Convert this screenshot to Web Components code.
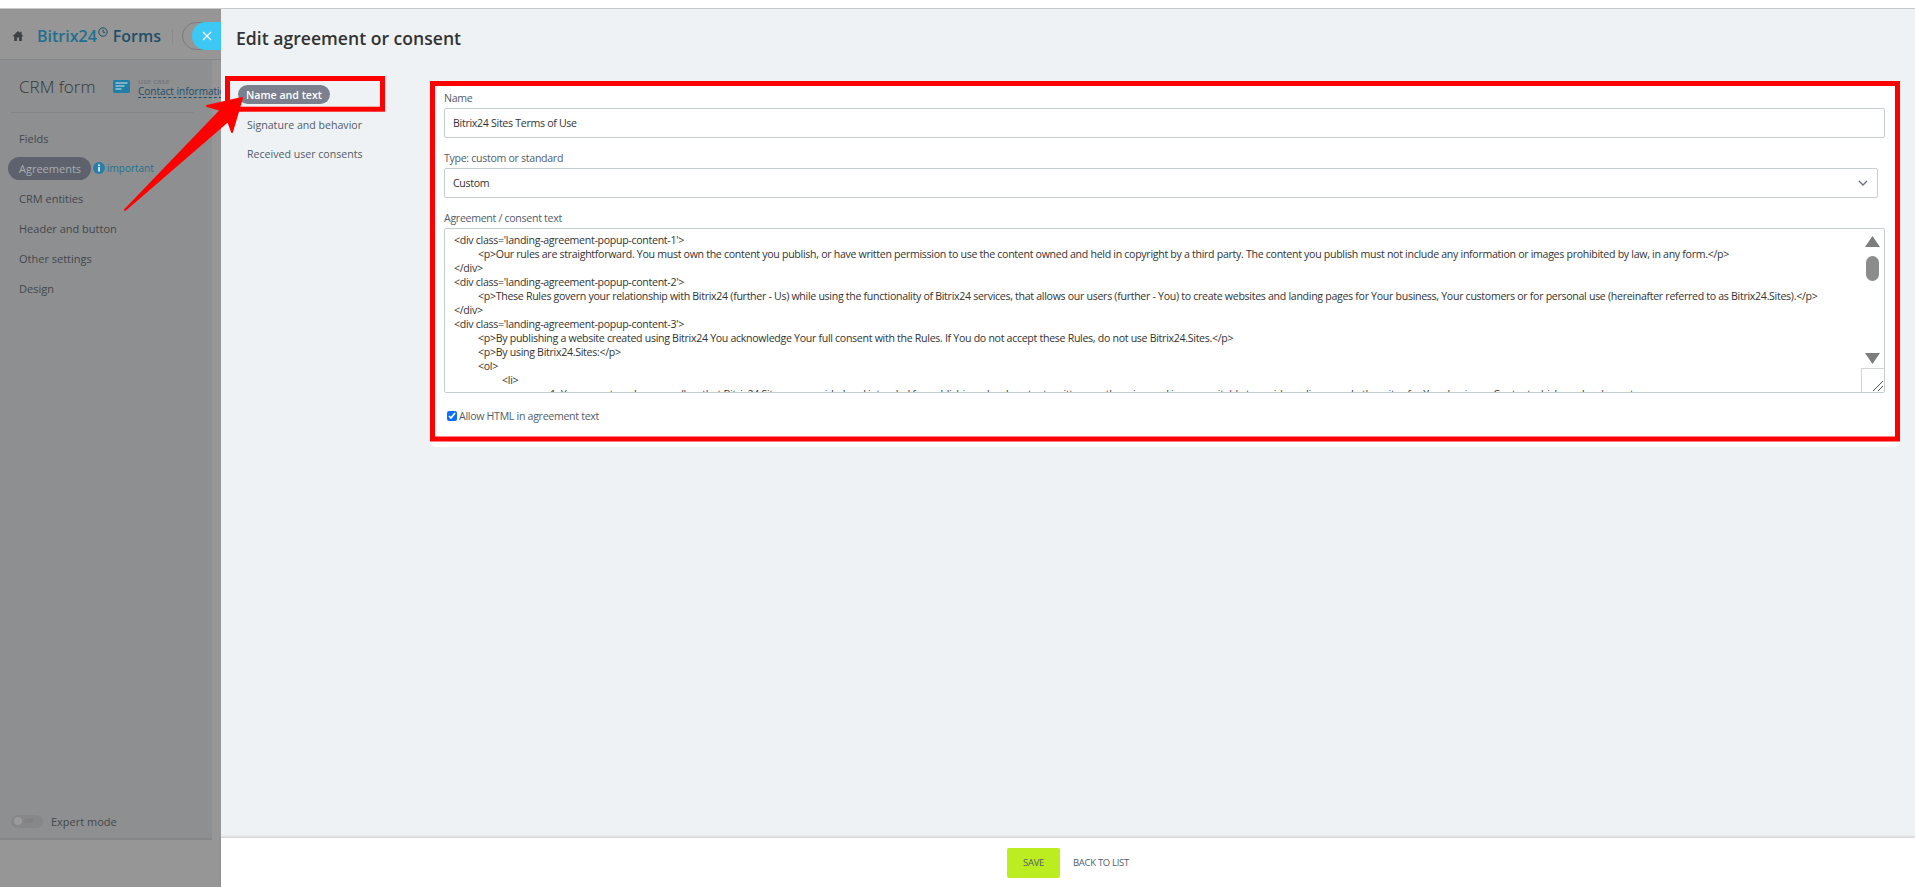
<!DOCTYPE html>
<html lang="en">
<head>
<meta charset="utf-8">
<title>Edit agreement or consent</title>
<style>
  html, body { margin: 0; height: 100%; overflow: hidden; background: #fff; }
  body { font-family: "Open Sans", "Liberation Sans", sans-serif; color: #333; }
</style>
</head>
<body>
<form-page></form-page>

<script>
// sidebar, dimmed by the open slider
class SideMenu extends HTMLElement {
  constructor() {
    super();
    this.attachShadow({ mode: "open" });
    const items = ["Fields", "Agreements", "CRM entities", "Header and button", "Other settings", "Design"];
    const rows = items.map((name) => {
      if (name === "Agreements") {
        return `<li class="on"><span class="pill">${name}</span>
          <svg width="12" height="12" viewBox="0 0 12 12"><circle cx="6" cy="6" r="6" fill="#2a7fa8"/><rect x="5" y="5" width="2" height="4.5" fill="#cfe3ee"/><rect x="5" y="2.4" width="2" height="1.7" fill="#cfe3ee"/></svg>
          <span class="imp">important</span></li>`;
      }
      return `<li>${name}</li>`;
    }).join("");
    this.shadowRoot.innerHTML = `
    <style>
      :host { display: flex; flex-direction: column; flex: none; width: 221px; height: 100%; overflow: hidden; background: #969696; color: #43474d; }
      svg { flex: none; }
      .top { display: flex; align-items: center; height: 51px; flex: none; border-bottom: 1px solid #868686; box-sizing: border-box; padding: 4px 0 0 12px; white-space: nowrap; }
      .brand { display: flex; align-items: center; flex: none; width: 160px; }
      .logo { margin-left: 13px; font-size: 16px; font-weight: 600; color: #1f6f90; }
      .logo b { font-weight: 600; color: #1f4f68; margin-left: 5px; }
      .clock { margin: -8px 0 0 1px; }
      .sep { flex: none; width: 1px; height: 15px; background: #8a8a8a; }
      .toggle { position: relative; flex: none; width: 60px; height: 28px; margin-left: 9px; border: 1px solid #7b7b7b; border-radius: 15px; box-sizing: border-box; }
      .close { position: absolute; left: 9px; top: -1px; width: 60px; height: 28px; border-radius: 14px; background: #3bc8f5; }
      .close svg { position: absolute; left: 10px; top: 9px; }
      .body { flex: 1; display: flex; flex-direction: column; width: 212px; background: #8e8f90; border-bottom: 2px solid #858585; box-sizing: border-box; }
      .head { display: flex; align-items: center; height: 53px; margin: 0 0 0 11px; width: 182px; flex: none; border-bottom: 1px solid #828384; box-sizing: border-box; padding: 0 0 0 8px; white-space: nowrap; }
      .head h1 { margin: 0; font-size: 17px; font-weight: 300; color: #33363a; width: 94px; flex: none; }
      .case { margin-left: 8px; display: flex; flex-direction: column; line-height: 11px; flex: none; }
      .case small { font-size: 8px; color: #6f7276; }
      .case a { font-size: 10px; color: #1d4d6b; border-bottom: 1px dashed #1d4d6b; }
      ul { list-style: none; margin: 10px 0 0; padding: 0; font-size: 11px; }
      li { display: flex; align-items: center; height: 30px; padding-left: 19px; }
      li.on { padding-left: 8px; color: #a9adb3; }
      .pill { display: flex; align-items: center; height: 23px; width: 83px; box-sizing: border-box; padding-left: 11px; border-radius: 12px; background: #5d626c; margin-right: 2px; }
      .imp { color: #1f6f90; font-size: 10px; margin-left: 2px; }
      .expert { margin-top: auto; display: flex; align-items: center; height: 28px; padding: 0 0 3px 11px; font-size: 11px; }
      .sw { display: flex; align-items: center; width: 32px; height: 13px; border-radius: 7px; background: #868788; margin-right: 8px; font-size: 5px; color: #727375; }
      .sw i { width: 8px; height: 8px; border-radius: 50%; background: #9a9a9a; margin: 0 2px 0 3px; }
      .foot { height: 47px; flex: none; }
    </style>
    <div class="top">
      <span class="brand">
        <svg width="12" height="12" viewBox="0 0 12 12"><path d="M6 1 .5 6.2h1.7V11h2.7V7.6h2.2V11h2.7V6.2h1.7L9.6 4.4V1.8H8.2v1.3z" fill="#3d4044"/></svg>
        <span class="logo">Bitrix24</span>
        <svg class="clock" width="10" height="10" viewBox="0 0 10 10" fill="none" stroke="#1f4f68"><circle cx="5" cy="5" r="4.2"/><path d="M5 2.4V5.3H7.4"/></svg>
        <span class="logo" style="margin-left:0"><b>Forms</b></span>
      </span>
      <span class="sep"></span>
      <span class="toggle"><span class="close"><svg width="10" height="10" viewBox="0 0 10 10"><path d="M1 1 9 9M9 1 1 9" stroke="#fff" stroke-width="1.2"/></svg></span></span>
    </div>
    <div class="body">
      <div class="head">
        <h1>CRM form</h1>
        <svg width="17" height="13" viewBox="0 0 17 13"><rect width="17" height="13" rx="1.5" fill="#1f7fa6"/><path d="M2.5 3h12M2.5 6h9M2.5 9h6" stroke="#9fc4d6" stroke-width="1.4"/></svg>
        <span class="case"><small>use case</small><a>Contact information</a></span>
      </div>
      <ul>${rows}</ul>
      <div class="expert"><span class="sw"><i></i>OFF</span>Expert mode</div>
    </div>
    <div class="foot"></div>`;
  }
}
customElements.define("side-menu", SideMenu);

class TabNav extends HTMLElement {
  constructor() {
    super();
    this.attachShadow({ mode: "open" });
    this.shadowRoot.innerHTML = `
    <style>
      :host { display: flex; flex-direction: column; flex: none; width: 209px; padding: 4px 0 0 17px; box-sizing: border-box; font-size: 10.6px; color: #535c69; }
      span { display: flex; align-items: center; height: 29px; padding-left: 9px; white-space: nowrap; }
      .on { align-self: flex-start; height: 19px; margin-bottom: 6px; padding: 0 8px; border-radius: 10px; background: #7a808d; color: #fff; font-weight: 600; }
    </style>
    <span class="on">Name and text</span>
    <span>Signature and behavior</span>
    <span>Received user consents</span>`;
  }
}
customElements.define("tab-nav", TabNav);

// label + control block
class FormField extends HTMLElement {
  constructor() {
    super();
    this.attachShadow({ mode: "open" });
    this.shadowRoot.innerHTML = `
    <style>
      :host { display: block; margin-bottom: 11px; color: #535c69; }
      label { display: block; height: 19px; line-height: 19px; }
      .box { display: flex; align-items: center; height: 30px; box-sizing: border-box; padding: 0 8px; border: 1px solid #c6cdd3; border-radius: 2px; background: #fff; color: #333; }
      :host([type="select"]) .box { margin-right: 7px; }
      :host([type="code"]) { margin-bottom: 0; }
      :host([type="code"]) .box { display: block; height: auto; padding: 0; border: 0; }
      ::slotted(svg) { margin-left: auto; margin-right: 1px; }
    </style>
    <label></label>
    <div class="box"><slot></slot></div>`;
  }
  connectedCallback() {
    this.shadowRoot.querySelector("label").textContent = this.getAttribute("label");
  }
}
customElements.define("form-field", FormField);

class CodeArea extends HTMLElement {
  constructor() {
    super();
    this.attachShadow({ mode: "open" });
    this.shadowRoot.innerHTML = `
    <style>
      :host { display: flex; height: 165px; box-sizing: border-box; border: 1px solid #c6cdd3; border-radius: 2px; overflow: hidden; background: #fff; color: #333; }
      pre { flex: 1; min-width: 0; margin: 0; padding: 4px 0 0 9px; overflow: hidden; font-family: inherit; font-size: inherit; line-height: 14px; tab-size: 24px; white-space: pre; }
      .bar { flex: none; width: 23px; display: flex; flex-direction: column; align-items: center; }
      .up { margin-top: 7px; }
      .thumb { width: 13px; height: 25px; margin-top: 9px; border-radius: 7px; background: #8c8c8c; }
      .down { margin-top: 72px; }
      .grip { margin-top: auto; width: 23px; height: 24px; box-sizing: border-box; border-top: 1px solid #d4d4d4; border-left: 1px solid #d4d4d4; display: flex; align-items: flex-end; justify-content: flex-end; }
    </style>
    <pre><slot></slot></pre>
    <div class="bar">
      <svg class="up" width="15" height="11" viewBox="0 0 15 11"><path d="M7.5 0 15 11H0z" fill="#7d7d7d"/></svg>
      <div class="thumb"></div>
      <svg class="down" width="15" height="11" viewBox="0 0 15 11"><path d="M7.5 11 15 0H0z" fill="#7d7d7d"/></svg>
      <div class="grip"><svg width="12" height="12" viewBox="0 0 12 12"><path d="M1 11 11 1M6 11 11 6" stroke="#555" stroke-width="1"/></svg></div>
    </div>`;
  }
}
customElements.define("code-area", CodeArea);

class EditCard extends HTMLElement {
  constructor() {
    super();
    this.attachShadow({ mode: "open" });
    this.shadowRoot.innerHTML = `
    <style>
      :host { display: block; width: 1470px; height: 366px; box-sizing: border-box; padding: 8px 15px 0 14px; background: #fff; border-radius: 0 0 6px 6px; font-size: 10.6px; letter-spacing: -.3px; color: #535c69; }
      .check { display: flex; align-items: center; height: 16px; margin-top: 15px; padding-left: 3px; }
      input { width: 10px; height: 10px; margin: 0 2px 0 0; accent-color: #0d6efd; }
    </style>
    <form-field label="Name">Bitrix24 Sites Terms of Use</form-field>
    <form-field label="Type: custom or standard" type="select">Custom
      <svg width="10" height="6" viewBox="0 0 10 6" fill="none"><path d="M1 1 5 5 9 1" stroke="#6b7480" stroke-width="1.4"/></svg>
    </form-field>
    <form-field label="Agreement / consent text" type="code"><slot></slot></form-field>
    <div class="check"><input type="checkbox" checked>Allow HTML in agreement text</div>`;
  }
}
customElements.define("edit-card", EditCard);

class EditSlider extends HTMLElement {
  constructor() {
    super();
    this.attachShadow({ mode: "open" });
    this.shadowRoot.innerHTML = `
    <style>
      :host { flex: 1; min-width: 0; display: flex; flex-direction: column; height: 100%; background: #eef2f4; }
      h2 { margin: 0; flex: none; height: 72px; box-sizing: border-box; padding: 17px 0 0 15px; font-size: 17.6px; line-height: 24px; font-weight: 600; color: #333; }
      .main { flex: 1; display: flex; min-height: 0; }
      footer { flex: none; height: 49px; display: flex; align-items: center; gap: 13px; padding-left: 786px; background: #fff; border-top: 1px solid #d5d7da; box-shadow: 0 -1px 2px rgba(0,0,0,.08); font-size: 9.5px; letter-spacing: -.3px; text-transform: uppercase; color: #535c69; }
      .save { display: flex; align-items: center; justify-content: center; width: 53px; height: 30px; border-radius: 2px; background: #bbed21; }
    </style>
    <h2>Edit agreement or consent</h2>
    <div class="main"><tab-nav></tab-nav><slot></slot></div>
    <footer><span class="save">Save</span><span>Back to list</span></footer>`;
  }
}
customElements.define("edit-slider", EditSlider);

// red marks drawn on top of the screenshot
class RedMarks extends HTMLElement {
  constructor() {
    super();
    this.attachShadow({ mode: "open" });
    this.shadowRoot.innerHTML = `
    <style>
      :host { position: absolute; inset: 0; pointer-events: none; }
      svg { position: absolute; left: 0; top: 0; }
    </style>
    <svg width="1915" height="887" viewBox="0 0 1915 887">
      <rect x="227.5" y="78.5" width="155" height="30.7" fill="none" stroke="#f00" stroke-width="5"/>
      <rect x="432.5" y="83.5" width="1465" height="355.5" fill="none" stroke="#f00" stroke-width="5"/>
      <path d="M125 210 221 110 207 106 242 98 232 132 228 121Z" fill="#f00" stroke="#f00" stroke-width="2" stroke-linejoin="round"/>
    </svg>`;
  }
}
customElements.define("red-marks", RedMarks);

class FormPage extends HTMLElement {
  constructor() {
    super();
    this.attachShadow({ mode: "open" });
    this.shadowRoot.innerHTML = `
    <style>
      :host { display: flex; flex-direction: column; position: relative; width: 1915px; height: 887px; overflow: hidden; }
      .strip { flex: none; height: 9px; background: #fff; border-bottom: 1px solid #c9c9c9; box-sizing: border-box; }
      .row { flex: 1; min-height: 0; display: flex; }
    </style>
    <div class="strip"></div>
    <div class="row">
      <side-menu></side-menu>
      <edit-slider>
        <edit-card>
          <code-area>&lt;div class='landing-agreement-popup-content-1'&gt;
	&lt;p&gt;Our rules are straightforward. You must own the content you publish, or have written permission to use the content owned and held in copyright by a third party. The content you publish must not include any information or images prohibited by law, in any form.&lt;/p&gt;
&lt;/div&gt;
&lt;div class='landing-agreement-popup-content-2'&gt;
	&lt;p&gt;These Rules govern your relationship with Bitrix24 (further - Us) while using the functionality of Bitrix24 services, that allows our users (further - You) to create websites and landing pages for Your business, Your customers or for personal use (hereinafter referred to as Bitrix24.Sites).&lt;/p&gt;
&lt;/div&gt;
&lt;div class='landing-agreement-popup-content-3'&gt;
	&lt;p&gt;By publishing a website created using Bitrix24 You acknowledge Your full consent with the Rules. If You do not accept these Rules, do not use Bitrix24.Sites.&lt;/p&gt;
	&lt;p&gt;By using Bitrix24.Sites:&lt;/p&gt;
	&lt;ol&gt;
		&lt;li&gt;
				1. You agree to only use or allow that Bitrix24.Sites are provided and intended for publishing a legal content, written or otherwise, and images suitable to a wide audience and other sites for Your business. Content which can be shown to a</code-area>
        </edit-card>
      </edit-slider>
    </div>
    <red-marks></red-marks>`;
  }
}
customElements.define("form-page", FormPage);
</script>
</body>
</html>
